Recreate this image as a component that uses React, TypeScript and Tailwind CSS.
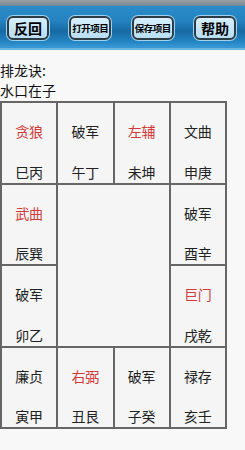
import React from "react";

type Cell = { star: string; branch: string; red?: boolean };

const top: Cell[] = [
  { star: "贪狼", branch: "巳丙", red: true },
  { star: "破军", branch: "午丁" },
  { star: "左辅", branch: "未坤", red: true },
  { star: "文曲", branch: "申庚" },
];

const bottom: Cell[] = [
  { star: "廉贞", branch: "寅甲" },
  { star: "右弼", branch: "丑艮", red: true },
  { star: "破军", branch: "子癸" },
  { star: "禄存", branch: "亥壬" },
];

const font = { fontFamily: '"Noto Sans CJK SC", "Noto Sans", sans-serif' };

function Palace({ cell }: { cell: Cell }) {
  return (
    <div className="bg-[#f5f5f5] flex flex-col items-center pt-[18px] pb-[1px]">
      <span className={`text-[14px] leading-[20px] ${cell.red ? "text-[#d03a3a]" : "text-[#222]"}`}>
        {cell.star}
      </span>
      <span className="mt-auto text-[14px] leading-[20px] text-[#222]">{cell.branch}</span>
    </div>
  );
}

function TopButton({ label, small }: { label: string; small?: boolean }) {
  return (
    <button className="w-[44px] h-[26px] rounded-[7px] p-[1px] bg-[#9fd2ee]">
      <div
        className={`w-full h-full rounded-[6px] border-2 border-[#2d3b44] bg-gradient-to-b from-[#d6eefb] to-[#b8def3] flex items-center justify-center font-bold text-black ${
          small ? "text-[9.5px] tracking-[-0.5px]" : "text-[14px]"
        }`}
      >
        {label}
      </div>
    </button>
  );
}

export default function App() {
  return (
    <div className="w-[245px] h-[450px] bg-[#f8f8f8] overflow-hidden" style={font}>
      <div className="h-[6px] bg-gradient-to-b from-[#a0a0a0] to-[#6f8796]" />
      <div className="h-[44px] bg-[linear-gradient(to_bottom,#2b8cca_0%,#2482c0_35%,#176aa4_60%,#2485c3_85%,#3a9ad6_100%)] border-b-2 border-[#6ab6e0] flex items-center justify-between pl-[6px] pr-[8px] pt-[2px]">
        <TopButton label="反回" />
        <TopButton label="打开项目" small />
        <TopButton label="保存项目" small />
        <TopButton label="帮助" />
      </div>

      <div className="pt-[10px] text-[14px] leading-[20px] text-[#111]">
        <div>排龙诀:</div>
        <div>水口在子</div>
      </div>

      <div className="mt-[1px] w-[227px] h-[328px] bg-[#666] p-[2px] grid grid-cols-4 grid-rows-4 gap-[2px]">
        {top.map((c, i) => (
          <Palace key={"t" + i} cell={c} />
        ))}
        <Palace cell={{ star: "武曲", branch: "辰巽", red: true }} />
        <div className="col-span-2 row-span-2 bg-[#f5f5f5]" />
        <Palace cell={{ star: "破军", branch: "酉辛" }} />
        <Palace cell={{ star: "破军", branch: "卯乙" }} />
        <Palace cell={{ star: "巨门", branch: "戌乾", red: true }} />
        {bottom.map((c, i) => (
          <Palace key={"b" + i} cell={c} />
        ))}
      </div>
    </div>
  );
}
